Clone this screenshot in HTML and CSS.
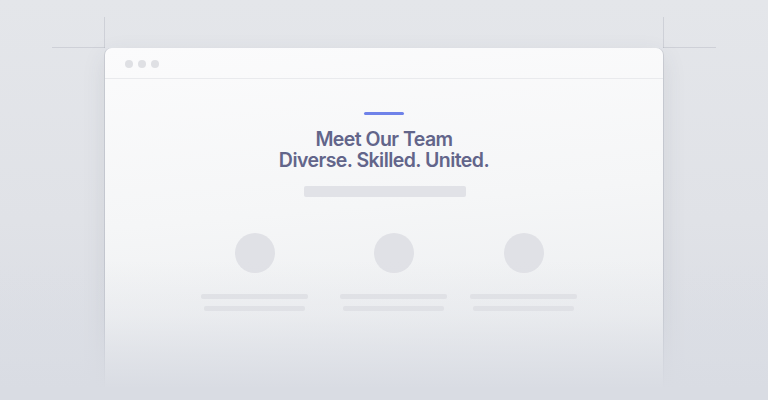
FILE: index.html
```html
<!DOCTYPE html>
<html lang="en">
<head>
<meta charset="utf-8">
<title>Meet Our Team</title>
<link rel="stylesheet" href="styles.css">
</head>
<body>
<div class="stage">
  <span class="guide guide-h guide-h-left"></span>
  <span class="guide guide-h guide-h-right"></span>
  <span class="guide guide-v guide-v-left"></span>
  <span class="guide guide-v guide-v-right"></span>
  <div class="window">
    <div class="titlebar">
      <span class="dot"></span><span class="dot"></span><span class="dot"></span>
    </div>
    <div class="content">
      <div class="accent"></div>
      <h1 class="title"><span class="title-line">Meet Our Team</span><span class="title-line">Diverse. Skilled. United.</span></h1>
      <div class="subtitle-bar"></div>
      <div class="team">
        <div class="member">
          <div class="avatar"></div>
          <div class="line line-long"></div>
          <div class="line line-short"></div>
        </div>
        <div class="member member-2">
          <div class="avatar"></div>
          <div class="line line-long"></div>
          <div class="line line-short"></div>
        </div>
        <div class="member member-3">
          <div class="avatar"></div>
          <div class="line line-long"></div>
          <div class="line line-short"></div>
        </div>
      </div>
    </div>
  </div>
  <div class="fade"></div>
</div>
</body>
</html>
```
FILE: styles.css
```css
* { box-sizing: border-box; }
html, body { margin: 0; height: 100%; }
body {
  background: linear-gradient(180deg, #e4e6ea 0%, #e0e2e7 55%, #d9dce3 100%);
  font-family: "Inter", "Liberation Sans", sans-serif;
  overflow: hidden;
}
.stage {
  position: relative;
  width: 768px;
  height: 400px;
  padding-top: 48px;
  padding-left: 105px;
  overflow: hidden;
}
.guide { position: absolute; background: rgba(150, 154, 168, 0.28); }
.guide-h { height: 1px; top: 47px; width: 53px; }
.guide-h-left { left: 52px; }
.guide-h-right { left: 663px; }
.guide-v { width: 1px; top: 17px; height: 31px; }
.guide-v-left { left: 104px; }
.guide-v-right { left: 663px; }

.window {
  width: 558px;
  height: 352px;
  background: linear-gradient(175deg, #fbfbfc 0%, #f5f6f7 45%, #e8eaed 100%);
  border-radius: 7px 7px 0 0;
  box-shadow: -1px 0 0 rgba(160, 164, 176, 0.35), 1px 0 0 rgba(160, 164, 176, 0.35), 0 8px 24px rgba(60, 66, 90, 0.10);
  display: flex;
  flex-direction: column;
}
.titlebar {
  height: 31px;
  border-bottom: 1px solid #e9eaed;
  display: flex;
  align-items: center;
  gap: 5px;
  padding-left: 20px;
  padding-top: 1px;
}
.dot { width: 8px; height: 8px; border-radius: 50%; background: #dfe0e4; }

.content {
  display: flex;
  flex-direction: column;
  align-items: center;
  padding-top: 33px;
}
.accent {
  width: 40px;
  height: 3px;
  border-radius: 2px;
  background: #6f82e9;
}
.title {
  margin: 14px 0 0;
  display: flex;
  flex-direction: column;
  align-items: center;
  font-size: 19.5px;
  font-weight: 600;
  letter-spacing: -0.55px;
  color: #62658a;
  text-align: center;
}
.title-line { display: block; height: 21px; line-height: 21px; }
.subtitle-bar {
  margin-top: 15px;
  width: 162px;
  height: 11px;
  border-radius: 2px;
  background: #e1e2e7;
  margin-left: 1px;
}
.team {
  display: flex;
  margin-top: 36px;
  margin-left: 10px;
}
.member {
  width: 107px;
  display: flex;
  flex-direction: column;
  align-items: center;
}
.member-2 { margin-left: 32px; }
.member-3 { margin-left: 23px; }
.avatar { width: 40px; height: 40px; border-radius: 50%; background: #e0e1e6; }
.line { height: 5px; border-radius: 2px; background: #e1e2e6; }
.line-long { width: 107px; margin-top: 21px; }
.line-short { width: 101px; margin-top: 7px; }

.fade {
  position: absolute;
  left: 0;
  right: 0;
  bottom: 0;
  height: 140px;
  background: linear-gradient(180deg, rgba(218, 221, 228, 0) 0%, rgba(218, 221, 228, 0.25) 40%, rgba(218, 221, 228, 0.7) 70%, #d9dce3 92%);
  pointer-events: none;
}
```
